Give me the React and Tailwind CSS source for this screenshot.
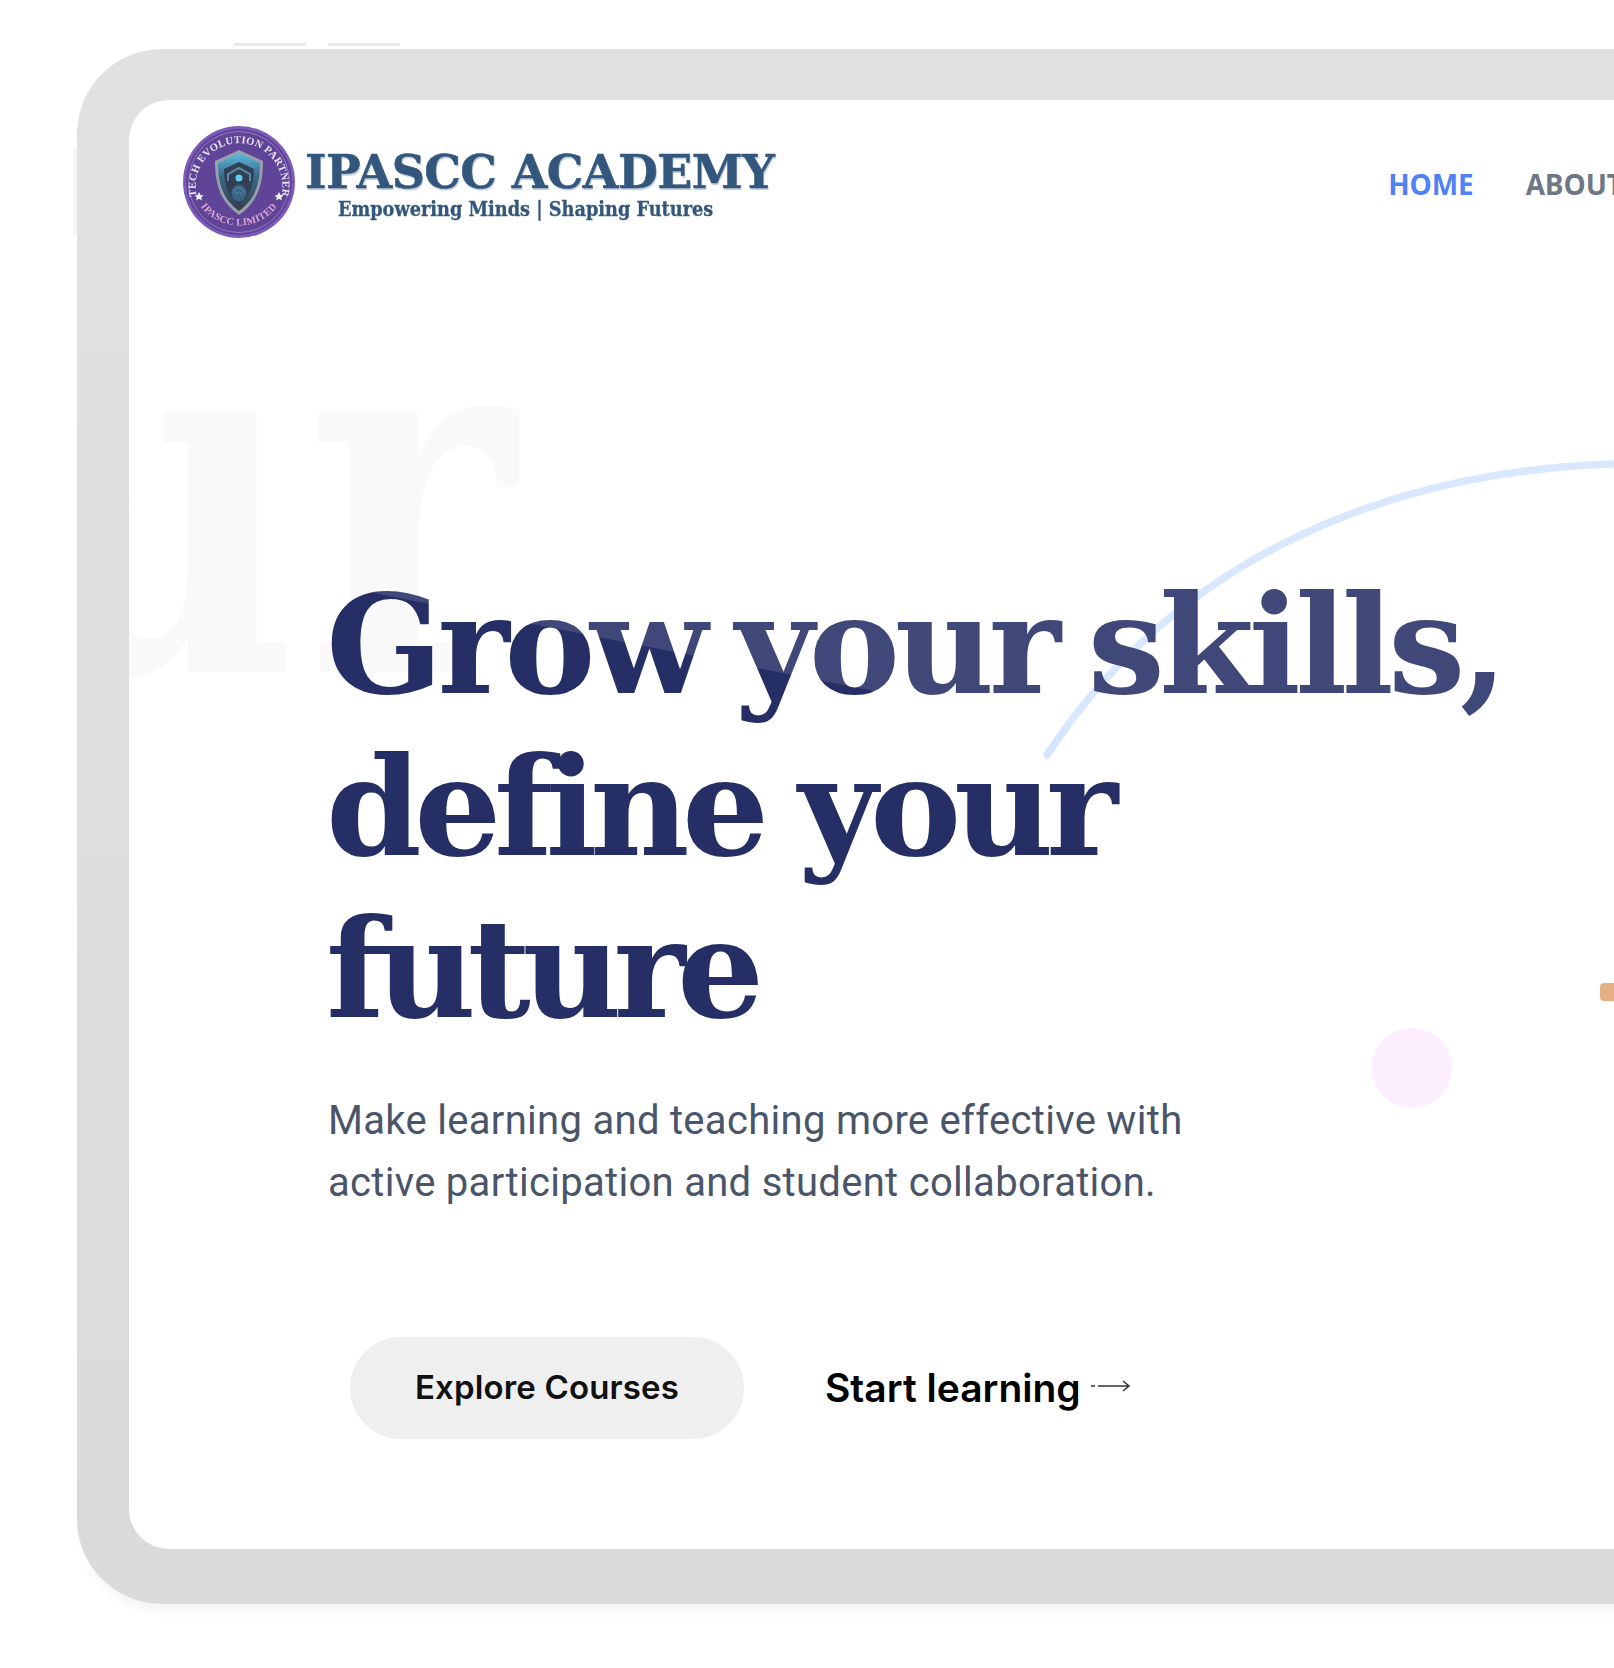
import React from 'react';

const serif = "font-['DejaVu_Serif',serif]";
const serifCond = "font-['DejaVu_Serif_Condensed','DejaVu_Serif',serif]";

const Emblem = () => (
  <svg viewBox="0 0 112 112" className="w-[112px] h-[112px] shrink-0">
    <defs>
      <path id="topArc" d="M14 72 A43.500 43.500 0 1 1 98 72" />
      <path id="bottomArc" d="M16 78 A48 48 0 0 0 96 78" />
      <linearGradient id="shieldFill" x1="0" y1="0" x2="0" y2="1">
        <stop offset="0" stopColor="#46b4dc" />
        <stop offset="0.4" stopColor="#1f5578" />
        <stop offset="1" stopColor="#1b2436" />
      </linearGradient>
    </defs>
    <circle cx="56" cy="56" r="56" fill="#6a45b0" />
    <circle cx="56" cy="56" r="53" fill="#4a2b8a" />
    <circle cx="56" cy="56" r="50.500" fill="none" stroke="#8f74c4" strokeWidth="0.8" />
    <text fontSize="10.500" fontWeight="700" fill="#e6e0f0" fontFamily="Liberation Serif, serif" textAnchor="middle" letterSpacing="0.3">
      <textPath href="#topArc" startOffset="50%">TECH EVOLUTION PARTNER</textPath>
    </text>
    <text fontSize="10" fontWeight="700" fill="#d79fd0" fontFamily="Liberation Serif, serif" textAnchor="middle" letterSpacing="0.3">
      <textPath href="#bottomArc" startOffset="50%">IPASCC LIMITED</textPath>
    </text>
    <path d="M16 70l1.500 3 3 .4-2.300 2 .7 3-2.900-1.600-2.900 1.600.7-3-2.300-2 3-.4z" fill="#eee" transform="translate(0 -4)" />
    <path d="M96 70l1.500 3 3 .4-2.300 2 .7 3-2.900-1.600-2.900 1.600.7-3-2.300-2 3-.4z" fill="#eee" transform="translate(0 -4)" />
    <path d="M56 24 L80 35 C80 60 74 76 56 89 C38 76 32 60 32 35 Z" fill="#8a93a3" />
    <path d="M56 27 L77 37 C77 60 71 74 56 85 C41 74 35 60 35 37 Z" fill="url(#shieldFill)" />
    <path d="M56 36 L71 43 C71 60 66 71 56 79 C46 71 41 60 41 43 Z" fill="#17263a" />
    <path d="M45 55 V48 L56 42 L67 48 V55" fill="none" stroke="#3f7a9c" strokeWidth="2" />
    <circle cx="56" cy="52" r="3.500" fill="#4cc3ef" />
    <ellipse cx="56" cy="67" rx="7.500" ry="8.500" fill="#1f4f73" />
    <path d="M51 67c0-7 10-7 10 0M53.500 69c0-4 5-4 5 0" fill="none" stroke="#4b8db3" strokeWidth="0.8" />
  </svg>
);

const Logo = () => (
  <div className="flex items-center gap-[10px] blur-[0.3px]">
    <Emblem />
    <div className="flex flex-col">
      <span className={`${serif} font-bold text-[46px] leading-[55px] tracking-[-0.6px] text-[#17406a] [-webkit-text-stroke:0.5px_#17406a] [text-shadow:1px_2px_1px_#b9c6d4] whitespace-nowrap`}>
        IPASCC ACADEMY
      </span>
      <span className={`${serifCond} font-bold text-[19.7px] leading-[20px] text-[#17406a] [-webkit-text-stroke:0.3px_#17406a] ml-[33px] whitespace-nowrap`}>
        Empowering Minds | Shaping Futures
      </span>
    </div>
  </div>
);

const ArrowIcon = () => (
  <svg viewBox="0 0 40 16" className="w-10 h-4 ml-[10px] mb-[4px]" fill="none" stroke="#333" strokeWidth="1.500">
    <path d="M0 8h4M7 8h31M32 3l6 5-6 5" />
  </svg>
);

export default function App() {
  return (
    <div className="relative w-[1614px] h-[1668px] overflow-hidden bg-white">
      {/* Side and top hardware buttons */}
      <div className="absolute left-[234px] top-[43px] w-[72px] h-[3px] rounded-full bg-[#e8e8e8]" />
      <div className="absolute left-[328px] top-[43px] w-[72px] h-[3px] rounded-full bg-[#e8e8e8]" />
      <div className="absolute left-[73px] top-[148px] w-[4px] h-[88px] bg-[#f6f6f6]" />

      {/* Tablet frame */}
      <div className="ml-[77px] mt-[49px] w-[1700px] h-[1555px] pt-[51px] pl-[52px] pb-[55px] rounded-[85px] bg-gradient-to-b from-[#e1e1e1] to-[#dadada] shadow-[0_14px_12px_-8px_rgba(0,0,0,0.05)]">
        <div className="relative h-full overflow-hidden rounded-tl-[40px] rounded-bl-[40px] bg-white">
          {/* Watermark word behind the hero */}
          <div className={`absolute left-[-117px] top-[97px] origin-left scale-x-[0.79] tracking-[10px] ${serif} font-bold text-[500px] leading-[600px] text-[#f9f9f9] whitespace-nowrap`}>
            ur
          </div>

          {/* Decorations */}
          <svg className="absolute left-0 top-0 w-[1485px] h-[1449px]" viewBox="0 0 1485 1449" fill="none">
            <path d="M918 655 C1040 470 1240 372 1485 364" stroke="#d5e5ff" strokeWidth="7.500" strokeLinecap="round" />
          </svg>
          <div className="absolute left-[1243px] top-[928px] w-20 h-20 rounded-full bg-[#fceeff]" />
          <div className="absolute left-[1471px] top-[883px] w-[40px] h-[18px] rounded-l bg-[#e6b184]" />

          {/* Nav */}
          <div className="relative flex items-center h-[164px] pl-[54px]">
            <Logo />
            <nav className="flex gap-[52px] ml-[614px] pt-[4px] font-['Open_Sans',sans-serif] font-bold text-[28px] tracking-[-0.1px] whitespace-nowrap">
              <a className="text-[#3b6ff5]">HOME</a>
              <a className="text-[#5b6675]">ABOUT</a>
            </nav>
          </div>

          {/* Hero */}
          <div className="relative pl-[199px] pt-[300px]">
            <h1 className={`${serif} -ml-[2px] font-bold text-[137px] leading-[162px] tracking-[-7.5px] [word-spacing:-4px] text-[#252f66] w-[1250px]`}>
              <span className="tracking-[-5.5px] [word-spacing:-10px]">Grow your skills,</span>
              <br />
              define your
              <br />
              <span className="tracking-[-8.5px]">future</span>
            </h1>
            <p className="mt-[40px] font-['Roboto',sans-serif] text-[40px] leading-[62px] tracking-[0.3px] text-[#4a5568]">
              Make learning and teaching more effective with
              <br />
              active participation and student collaboration.
            </p>
            <div className="flex items-center mt-[123px] ml-[22px]">
              <button className="w-[394px] h-[102px] rounded-full bg-[#efefef] font-['Inter',sans-serif] font-semibold text-[33px] tracking-[0.15px] text-[#111]">
                Explore Courses
              </button>
              <a className="flex items-center ml-[81px] font-['Inter',sans-serif] font-semibold text-[39px] text-black">
                Start learning
                <ArrowIcon />
              </a>
            </div>
          </div>

          {/* Translucent wash that lies over the headline */}
          <div className="absolute inset-0 bg-white/[0.12] [clip-path:polygon(0_445px,100%_768px,100%_0,0_0)]" />
        </div>
      </div>
    </div>
  );
}
